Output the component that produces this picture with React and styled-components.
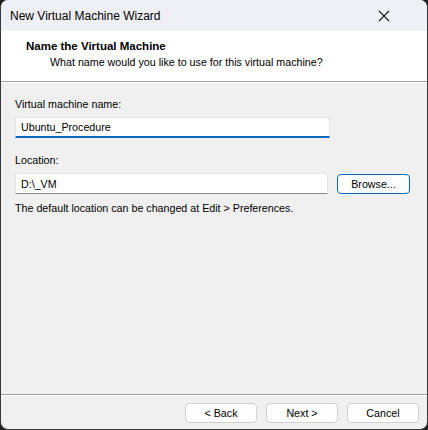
import styled, { createGlobalStyle } from "styled-components";

const GlobalStyle = createGlobalStyle`
  html, body {
    margin: 0;
    padding: 0;
    background: #1f1f1f;
  }
  body {
    font-family: "Segoe UI", "Liberation Sans", Arial, sans-serif;
    font-size: 10.7px;
    color: #000000;
  }
`;

const Window = styled.div`
  box-sizing: border-box;
  width: 428px;
  height: 430px;
  display: flex;
  flex-direction: column;
  background: #f0f0f0;
  border: 1px solid #3a3a3a;
  border-top: none;
  border-radius: 8px;
  overflow: hidden;
`;

const TitleBar = styled.div`
  height: 31px;
  flex-shrink: 0;
  display: flex;
  align-items: center;
  justify-content: space-between;
  padding: 0 0 0 9px;
  background: #eff0f5;
`;

const TitleText = styled.div`
  font-size: 12px;
  line-height: 16px;
  color: #000000;
`;

const CloseButton = styled.div`
  width: 46px;
  height: 31px;
  display: flex;
  align-items: center;
  justify-content: center;
  margin-right: 20px;
`;

const Header = styled.div`
  height: 51px;
  flex-shrink: 0;
  display: flex;
  flex-direction: column;
  padding: 7px 0 0 25px;
  box-sizing: border-box;
  background: #ffffff;
  border-bottom: 1px solid #a0a0a0;
  box-shadow: 0 1px 0 #ffffff;
`;

const HeaderTitle = styled.div`
  font-weight: bold;
  font-size: 11.5px;
  line-height: 16px;
`;

const HeaderSub = styled.div`
  padding-left: 24px;
  line-height: 16px;
`;

const Body = styled.div`
  flex: 1;
  display: flex;
  flex-direction: column;
  padding: 14px 17px 0 14px;
`;

const Label = styled.div`
  line-height: 16px;
  margin-bottom: 5px;
`;

const Row = styled.div`
  display: flex;
  align-items: center;
  gap: 9px;
  margin-bottom: ${(p) => p.$gap || 0}px;
`;

const Field = styled.div`
  box-sizing: border-box;
  width: 315px;
  height: 21px;
  display: flex;
  align-items: center;
  padding: 0 5px;
  background: #ffffff;
  border: 1px solid #e3e3e3;
  border-bottom: ${(p) => (p.$focused ? "2px solid #0067c0" : "1px solid #8c8c8c")};
  border-radius: 3px 3px 0 0;
  line-height: 16px;
`;

const Hint = styled.div`
  margin-top: 6px;
  line-height: 16px;
`;

const Footer = styled.div`
  height: 35px;
  flex-shrink: 0;
  display: flex;
  align-items: flex-start;
  justify-content: flex-end;
  gap: 9px;
  padding: 8px 8px 0 0;
  box-sizing: border-box;
  border-top: 1px solid #a0a0a0;
  box-shadow: inset 0 1px 0 #ffffff;
`;

const Button = styled.div`
  box-sizing: border-box;
  width: ${(p) => p.$width || 72}px;
  height: 20px;
  display: flex;
  align-items: center;
  justify-content: center;
  background: #fdfdfd;
  border: 1px solid ${(p) => (p.$default ? "#0067c0" : "#d0d0d0")};
  border-radius: 4px;
  line-height: 16px;
  flex-shrink: 0;
`;

export default function App() {
  return (
    <>
      <GlobalStyle />
      <Window>
        <TitleBar>
          <TitleText>New Virtual Machine Wizard</TitleText>
          <CloseButton>
            <svg width="12" height="12" viewBox="0 0 12 12">
              <path d="M1 1 L11 11 M11 1 L1 11" stroke="#1a1a1a" strokeWidth="1.1" fill="none" />
            </svg>
          </CloseButton>
        </TitleBar>
        <Header>
          <HeaderTitle>Name the Virtual Machine</HeaderTitle>
          <HeaderSub>What name would you like to use for this virtual machine?</HeaderSub>
        </Header>
        <Body>
          <Label>Virtual machine name:</Label>
          <Row $gap={14}>
            <Field $focused>Ubuntu_Procedure</Field>
          </Row>
          <Label>Location:</Label>
          <Row>
            <Field>D:\_VM</Field>
            <Button $default $width={73}>Browse...</Button>
          </Row>
          <Hint>The default location can be changed at Edit &gt; Preferences.</Hint>
        </Body>
        <Footer>
          <Button>&lt; Back</Button>
          <Button>Next &gt;</Button>
          <Button>Cancel</Button>
        </Footer>
      </Window>
    </>
  );
}
